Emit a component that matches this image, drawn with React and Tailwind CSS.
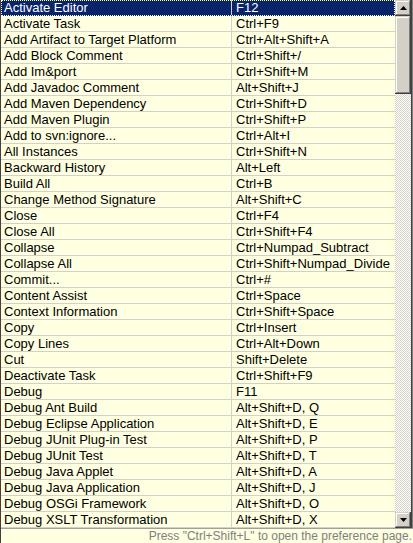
import React from 'react'

const bindings = [
  ['Activate Editor', 'F12'],
  ['Activate Task', 'Ctrl+F9'],
  ['Add Artifact to Target Platform', 'Ctrl+Alt+Shift+A'],
  ['Add Block Comment', 'Ctrl+Shift+/'],
  ['Add Im&port', 'Ctrl+Shift+M'],
  ['Add Javadoc Comment', 'Alt+Shift+J'],
  ['Add Maven Dependency', 'Ctrl+Shift+D'],
  ['Add Maven Plugin', 'Ctrl+Shift+P'],
  ['Add to svn:ignore...', 'Ctrl+Alt+I'],
  ['All Instances', 'Ctrl+Shift+N'],
  ['Backward History', 'Alt+Left'],
  ['Build All', 'Ctrl+B'],
  ['Change Method Signature', 'Alt+Shift+C'],
  ['Close', 'Ctrl+F4'],
  ['Close All', 'Ctrl+Shift+F4'],
  ['Collapse', 'Ctrl+Numpad_Subtract'],
  ['Collapse All', 'Ctrl+Shift+Numpad_Divide'],
  ['Commit...', 'Ctrl+#'],
  ['Content Assist', 'Ctrl+Space'],
  ['Context Information', 'Ctrl+Shift+Space'],
  ['Copy', 'Ctrl+Insert'],
  ['Copy Lines', 'Ctrl+Alt+Down'],
  ['Cut', 'Shift+Delete'],
  ['Deactivate Task', 'Ctrl+Shift+F9'],
  ['Debug', 'F11'],
  ['Debug Ant Build', 'Alt+Shift+D, Q'],
  ['Debug Eclipse Application', 'Alt+Shift+D, E'],
  ['Debug JUnit Plug-in Test', 'Alt+Shift+D, P'],
  ['Debug JUnit Test', 'Alt+Shift+D, T'],
  ['Debug Java Applet', 'Alt+Shift+D, A'],
  ['Debug Java Application', 'Alt+Shift+D, J'],
  ['Debug OSGi Framework', 'Alt+Shift+D, O'],
  ['Debug XSLT Transformation', 'Alt+Shift+D, X'],
]

const bevel =
  'bg-[#d4d0c8] shadow-[inset_-1px_-1px_#404040,inset_1px_1px_#d4d0c8,inset_-2px_-2px_#808080,inset_2px_2px_#ffffff]'

function ArrowButton({ down }) {
  return (
    <div className={`flex h-4 w-4 items-center justify-center ${bevel}`}>
      <svg width="7" height="4" viewBox="0 0 7 4">
        {down ? <path d="M0 0h7L3.5 4z" fill="#000" /> : <path d="M3.5 0L7 4H0z" fill="#000" />}
      </svg>
    </div>
  )
}

export default function App() {
  return (
    <div
      className="flex h-[543px] w-[413px] flex-col overflow-hidden border-l border-[#404040] bg-[#ffffe1] text-black"
      style={{ fontFamily: '"Liberation Sans", Arial, sans-serif' }}
    >
      <div className="flex h-[528px] text-[13px] leading-[15px]">
        {/* Key binding rows */}
        <div className="min-w-0 flex-1">
          {bindings.map(([command, keys], i) => {
            const selected = i === 0
            return (
              <div
                key={command}
                className={`flex h-4 border-b ${
                  selected
                    ? 'border-[#0a246a] bg-[#0a246a] text-white outline-1 -outline-offset-1 outline-dotted outline-[#ffffe1]'
                    : 'border-[#d4d0c8]'
                }`}
              >
                <div className="w-[231px] shrink-0 truncate border-r border-[#d4d0c8] pl-[3px]">
                  {command}
                </div>
                <div className="min-w-0 flex-1 truncate pl-[4px]">{keys}</div>
              </div>
            )
          })}
        </div>

        {/* Scrollbar */}
        <div className="flex w-4 flex-col">
          <ArrowButton />
          <div className="flex flex-1 flex-col bg-[repeating-conic-gradient(#d4d0c8_0%_25%,#ffffff_0%_50%)] bg-[length:2px_2px]">
            <div className={`h-[78px] ${bevel}`} />
          </div>
          <ArrowButton down />
        </div>
        <div className="w-[2px] border-l border-[#404040] bg-[#808080]" />
      </div>

      {/* Footer hint */}
      <div className="flex h-[15px] items-center justify-end whitespace-nowrap border-t border-[#a0a0a0] pr-[1px] text-[12px] leading-[14px] text-[#808080]">
        Press "Ctrl+Shift+L" to open the preference page.
      </div>
    </div>
  )
}
